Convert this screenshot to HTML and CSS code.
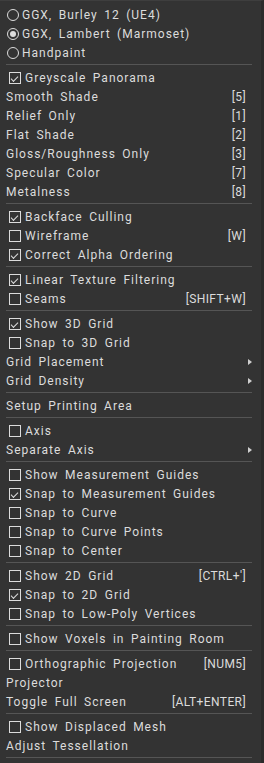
FILE: index.html
```html
<!DOCTYPE html>
<html>
<head>
<link rel="stylesheet" href="styles.css">
</head>
<body>
<div class="menu">
  <div class="row"><span class="radio"></span><span class="label">GGX, Burley 12 (UE4)</span></div>
  <div class="row"><span class="radio on"></span><span class="label">GGX, Lambert (Marmoset)</span></div>
  <div class="row"><span class="radio"></span><span class="label">Handpaint</span></div>
  <div class="sep"></div>
  <div class="row"><span class="box on"></span><span class="label">Greyscale Panorama</span></div>
  <div class="row plain"><span class="label">Smooth Shade</span><span class="key">[5]</span></div>
  <div class="row plain"><span class="label">Relief Only</span><span class="key">[1]</span></div>
  <div class="row plain"><span class="label">Flat Shade</span><span class="key">[2]</span></div>
  <div class="row plain"><span class="label">Gloss/Roughness Only</span><span class="key">[3]</span></div>
  <div class="row plain"><span class="label">Specular Color</span><span class="key">[7]</span></div>
  <div class="row plain"><span class="label">Metalness</span><span class="key">[8]</span></div>
  <div class="sep"></div>
  <div class="row"><span class="box on"></span><span class="label">Backface Culling</span></div>
  <div class="row"><span class="box"></span><span class="label">Wireframe</span><span class="key">[W]</span></div>
  <div class="row"><span class="box on"></span><span class="label">Correct Alpha Ordering</span></div>
  <div class="sep"></div>
  <div class="row"><span class="box on"></span><span class="label">Linear Texture Filtering</span></div>
  <div class="row"><span class="box"></span><span class="label">Seams</span><span class="key">[SHIFT+W]</span></div>
  <div class="sep"></div>
  <div class="row"><span class="box on"></span><span class="label">Show 3D Grid</span></div>
  <div class="row"><span class="box"></span><span class="label">Snap to 3D Grid</span></div>
  <div class="row plain"><span class="label">Grid Placement</span><span class="arrow"></span></div>
  <div class="row plain"><span class="label">Grid Density</span><span class="arrow"></span></div>
  <div class="sep"></div>
  <div class="row plain"><span class="label">Setup Printing Area</span></div>
  <div class="sep"></div>
  <div class="row"><span class="box"></span><span class="label">Axis</span></div>
  <div class="row plain"><span class="label">Separate Axis</span><span class="arrow"></span></div>
  <div class="sep"></div>
  <div class="row"><span class="box"></span><span class="label">Show Measurement Guides</span></div>
  <div class="row"><span class="box on"></span><span class="label">Snap to Measurement Guides</span></div>
  <div class="row"><span class="box"></span><span class="label">Snap to Curve</span></div>
  <div class="row"><span class="box"></span><span class="label">Snap to Curve Points</span></div>
  <div class="row"><span class="box"></span><span class="label">Snap to Center</span></div>
  <div class="sep"></div>
  <div class="row"><span class="box"></span><span class="label">Show 2D Grid</span><span class="key">[CTRL+']</span></div>
  <div class="row"><span class="box on"></span><span class="label">Snap to 2D Grid</span></div>
  <div class="row"><span class="box"></span><span class="label">Snap to Low-Poly Vertices</span></div>
  <div class="sep"></div>
  <div class="row"><span class="box"></span><span class="label">Show Voxels in Painting Room</span></div>
  <div class="sep"></div>
  <div class="row"><span class="box"></span><span class="label">Orthographic Projection</span><span class="key">[NUM5]</span></div>
  <div class="row plain"><span class="label">Projector</span></div>
  <div class="row plain"><span class="label">Toggle Full Screen</span><span class="key">[ALT+ENTER]</span></div>
  <div class="sep"></div>
  <div class="row"><span class="box"></span><span class="label">Show Displaced Mesh</span></div>
  <div class="row plain"><span class="label">Adjust Tessellation</span></div>
  <div class="sep"></div>
</div>
</body>
</html>
```

FILE: styles.css
```css
html, body {
  margin: 0;
  background: #333333;
}
.menu {
  width: 264px;
  height: 763px;
  box-sizing: border-box;
  padding-top: 4px;
  border-right: 3px solid #2b2b2b;
  border-top: 1px solid #3e3e3e;
  background: #333333;
  font-family: Roboto, "Liberation Sans", sans-serif;
  font-size: 12px;
  letter-spacing: 1px;
  word-spacing: 2.5px;
  color: #dcdcdc;
}
.row {
  height: 19px;
  display: flex;
  align-items: center;
  padding: 0 15px 0 9px;
}
.row.plain {
  padding-left: 6px;
}
.label {
  flex: 1;
  white-space: nowrap;
}
.key {
  letter-spacing: 0.4px;
  word-spacing: 0;
}
.sep {
  height: 1px;
  margin: 2px 9px 3px 6px;
  background: #555555;
}
.box {
  width: 10px;
  height: 10px;
  border: 1px solid #dcdcdc;
  margin-right: 4px;
  flex: none;
  position: relative;
}
.box.on::after {
  content: "";
  position: absolute;
  left: 2px;
  top: 0px;
  width: 6px;
  height: 3px;
  border-left: 1px solid #dcdcdc;
  border-bottom: 1px solid #dcdcdc;
  transform: translate(-1px, 3px) rotate(-45deg);
}
.radio {
  width: 10px;
  height: 10px;
  border: 1.5px solid #dcdcdc;
  border-radius: 50%;
  margin: 0 3px 0 -2px;
  flex: none;
  position: relative;
}
.radio.on::after {
  content: "";
  position: absolute;
  left: 2px;
  top: 2px;
  width: 6px;
  height: 6px;
  border-radius: 50%;
  background: #dcdcdc;
}
.arrow {
  width: 0;
  height: 0;
  border-top: 3.5px solid transparent;
  border-bottom: 3.5px solid transparent;
  border-left: 4px solid #cfcfcf;
  margin-right: -6px;
}
```
